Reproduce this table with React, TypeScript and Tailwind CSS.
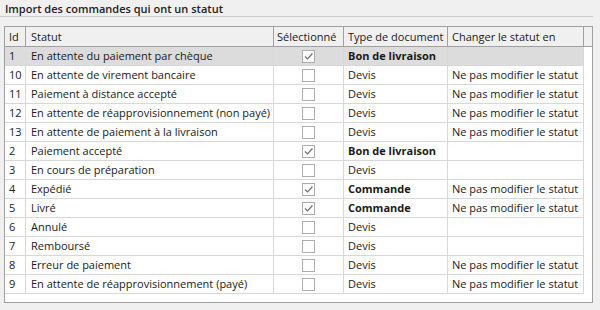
import React from 'react';

type Row = {
  id: string;
  label: string;
  checked: boolean;
  doc: string;
  bold: boolean;
  change: string;
};

const rows: Row[] = [
  { id: '1', label: 'En attente du paiement par chèque', checked: true, doc: 'Bon de livraison', bold: true, change: '' },
  { id: '10', label: 'En attente de virement bancaire', checked: false, doc: 'Devis', bold: false, change: 'Ne pas modifier le statut' },
  { id: '11', label: 'Paiement à distance accepté', checked: false, doc: 'Devis', bold: false, change: 'Ne pas modifier le statut' },
  { id: '12', label: 'En attente de réapprovisionnement (non payé)', checked: false, doc: 'Devis', bold: false, change: 'Ne pas modifier le statut' },
  { id: '13', label: 'En attente de paiement à la livraison', checked: false, doc: 'Devis', bold: false, change: 'Ne pas modifier le statut' },
  { id: '2', label: 'Paiement accepté', checked: true, doc: 'Bon de livraison', bold: true, change: '' },
  { id: '3', label: 'En cours de préparation', checked: false, doc: 'Devis', bold: false, change: '' },
  { id: '4', label: 'Expédié', checked: true, doc: 'Commande', bold: true, change: 'Ne pas modifier le statut' },
  { id: '5', label: 'Livré', checked: true, doc: 'Commande', bold: true, change: 'Ne pas modifier le statut' },
  { id: '6', label: 'Annulé', checked: false, doc: 'Devis', bold: false, change: '' },
  { id: '7', label: 'Remboursé', checked: false, doc: 'Devis', bold: false, change: '' },
  { id: '8', label: 'Erreur de paiement', checked: false, doc: 'Devis', bold: false, change: 'Ne pas modifier le statut' },
  { id: '9', label: 'En attente de réapprovisionnement (payé)', checked: false, doc: 'Devis', bold: false, change: 'Ne pas modifier le statut' },
];

const Check = ({ on }: { on: boolean }) => (
  <div className="w-[13px] h-[13px] border border-[#adadad] bg-white flex items-center justify-center">
    {on && (
      <svg width="11" height="11" viewBox="0 0 11 11">
        <path d="M2 5.5 L4.5 8 L9.5 2.5" fill="none" stroke="#6e6e6e" strokeWidth="1.2" />
      </svg>
    )}
  </div>
);

export default function App() {
  return (
    <div className="w-[600px] h-[310px] bg-[#f0f0f0] text-[11px] text-[#1a1a1a] font-['Open_Sans',sans-serif] overflow-hidden">
      <div className="w-[593px] h-[17px] border-b border-[#c8c8c8] pl-[5px] pt-[1px] leading-[16px] font-semibold text-[#222]">
        Import des commandes qui ont un statut
      </div>
      <div className="ml-[4px] mt-[9px] w-[589px] h-[277px] border border-[#a0a0a0] bg-white flex flex-col">
        <div className="flex h-[20px] bg-[#f0f0f0] border-b border-[#a0a0a0] leading-[19px] whitespace-nowrap">
          <div className="w-[21px] border-r border-[#a0a0a0] pl-[4px]">Id</div>
          <div className="w-[248px] border-r border-[#a0a0a0] pl-[5px]">Statut</div>
          <div className="w-[70px] border-r border-[#a0a0a0] pl-[3px]">Sélectionné</div>
          <div className="w-[104px] border-r border-[#a0a0a0] pl-[4px]">Type de document</div>
          <div className="w-[136px] border-r border-[#a0a0a0] pl-[4px]">Changer le statut en</div>
          <div className="flex-1" />
        </div>
        {rows.map((r, i) => (
          <div key={r.id} className="flex h-[19px] leading-[18px]">
            <div className={`flex ${i === 0 ? 'bg-[#dcdcdc]' : ''}`}>
              <div className="w-[21px] border-r border-b border-[#d8d8d8] pl-[4px]">{r.id}</div>
              <div className="w-[248px] border-r border-b border-[#d8d8d8] pl-[5px] whitespace-nowrap">{r.label}</div>
              <div className="w-[70px] border-r border-b border-[#d8d8d8] flex items-center justify-center">
                <Check on={r.checked} />
              </div>
              <div className={`w-[104px] border-r border-b border-[#d8d8d8] pl-[4px] whitespace-nowrap ${r.bold ? 'font-bold' : ''}`}>{r.doc}</div>
              <div className="w-[136px] border-r border-b border-[#d8d8d8] pl-[4px] whitespace-nowrap">{r.change}</div>
            </div>
            <div className="flex-1" />
          </div>
        ))}
      </div>
    </div>
  );
}
